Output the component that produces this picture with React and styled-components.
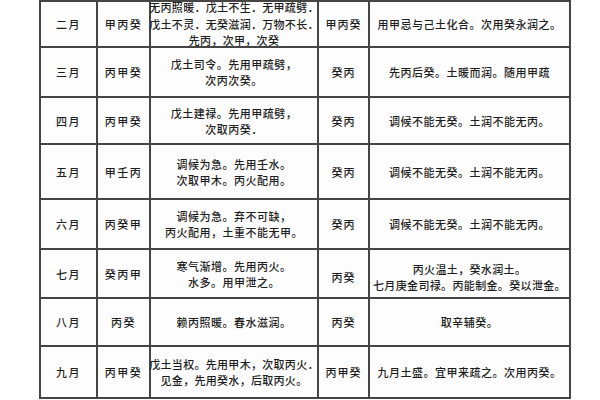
import React from "react";
import styled, { createGlobalStyle } from "styled-components";

const Global = createGlobalStyle`
  html, body { margin: 0; padding: 0; background: #ffffff; }
  body { width: 600px; height: 400px; overflow: hidden; }
`;

const Page = styled.div`
  padding-left: 39px;
  width: 600px;
  height: 400px;
  box-sizing: border-box;
  overflow: hidden;
`;

const Table = styled.div`
  display: grid;
  width: 532px;
  grid-template-columns: 55px 51px 166px 49px 199px;
  grid-template-rows: 44px 48px 45px 53px 48px 47px 46px 50px;
  gap: 2px;
  padding: 2px;
  box-sizing: border-box;
  background: #454545;
  font-family: "Noto Sans CJK SC", "Noto Sans", sans-serif;
  font-size: 11px;
  font-weight: 500;
  color: #1e1e1e;
`;

const Cell = styled.div`
  background: #fdfdfd;
  display: flex;
  flex-direction: column;
  align-items: center;
  justify-content: center;
  text-align: center;
  white-space: nowrap;
  line-height: ${(p) => p.$lh || 16}px;
  letter-spacing: ${(p) => (p.$ls === undefined ? 0.5 : p.$ls)}px;
  overflow: visible;
  position: relative;
  z-index: ${(p) => (p.$over ? 1 : 0)};
  padding-top: ${(p) => p.$pt || 0}px;
`;

const Line = styled.span`
  display: block;
`;

const rows = [
  {
    m: "二月",
    a: "甲丙癸",
    t: ["无丙照暖．戊土不生．无甲疏劈．", "戊土不灵．无癸滋润．万物不长．", "先丙，次甲，次癸"],
    tls: 0.3,
    b: "甲丙癸",
    n: ["用甲忌与己土化合。次用癸永润之。"],
    lh: 16.5,
  },
  { m: "三月", a: "丙甲癸", t: ["戊土司令。先用甲疏劈，", "次丙次癸。"], b: "癸丙", n: ["先丙后癸。土暖而润。随用甲疏"] },
  { m: "四月", a: "丙甲癸", t: ["戊土建禄。先用甲疏劈，", "次取丙癸．"], b: "癸丙", n: ["调候不能无癸。土润不能无丙。"] },
  { m: "五月", a: "甲壬丙", t: ["调候为急。先用壬水。", "次取甲木。丙火配用。"], b: "癸丙", n: ["调候不能无癸。土润不能无丙。"] },
  { m: "六月", a: "丙癸甲", t: ["调候为急。弃不可缺，", "丙火配用，土重不能无甲。"], b: "癸丙", n: ["调候不能无癸。土润不能无丙。"] },
  {
    m: "七月",
    a: "癸丙甲",
    t: ["寒气渐增。先用丙火。", "水多。用甲泄之。"],
    b: "丙癸",
    n: ["丙火温土，癸水润土。", "七月庚金司禄。丙能制金。癸以泄金。"],
    nls: 0.35,
    pt: 6,
  },
  { m: "八月", a: "丙癸", t: ["赖丙照暖。春水滋润。"], b: "丙癸", n: ["取辛辅癸。"] },
  {
    m: "九月",
    a: "丙甲癸",
    t: ["戊土当权。先用甲木，次取丙火．", "见金，先用癸水，后取丙火。"],
    tls: 0.3,
    b: "丙甲癸",
    n: ["九月土盛。宜甲来疏之。次用丙癸。"],
  },
];

export default function App() {
  return (
    <>
      <Global />
      <Page>
        <Table>
          {rows.map((r) => (
            <React.Fragment key={r.m}>
              <Cell $ls={1.5}>{r.m}</Cell>
              <Cell $ls={1.5}>{r.a}</Cell>
              <Cell $lh={r.lh} $ls={r.tls} $over>
                {r.t.map((l) => (
                  <Line key={l}>{l}</Line>
                ))}
              </Cell>
              <Cell $ls={1} $pt={r.pt}>{r.b}</Cell>
              <Cell $pt={r.pt} $ls={r.nls}>
                {r.n.map((l) => (
                  <Line key={l}>{l}</Line>
                ))}
              </Cell>
            </React.Fragment>
          ))}
        </Table>
      </Page>
    </>
  );
}
